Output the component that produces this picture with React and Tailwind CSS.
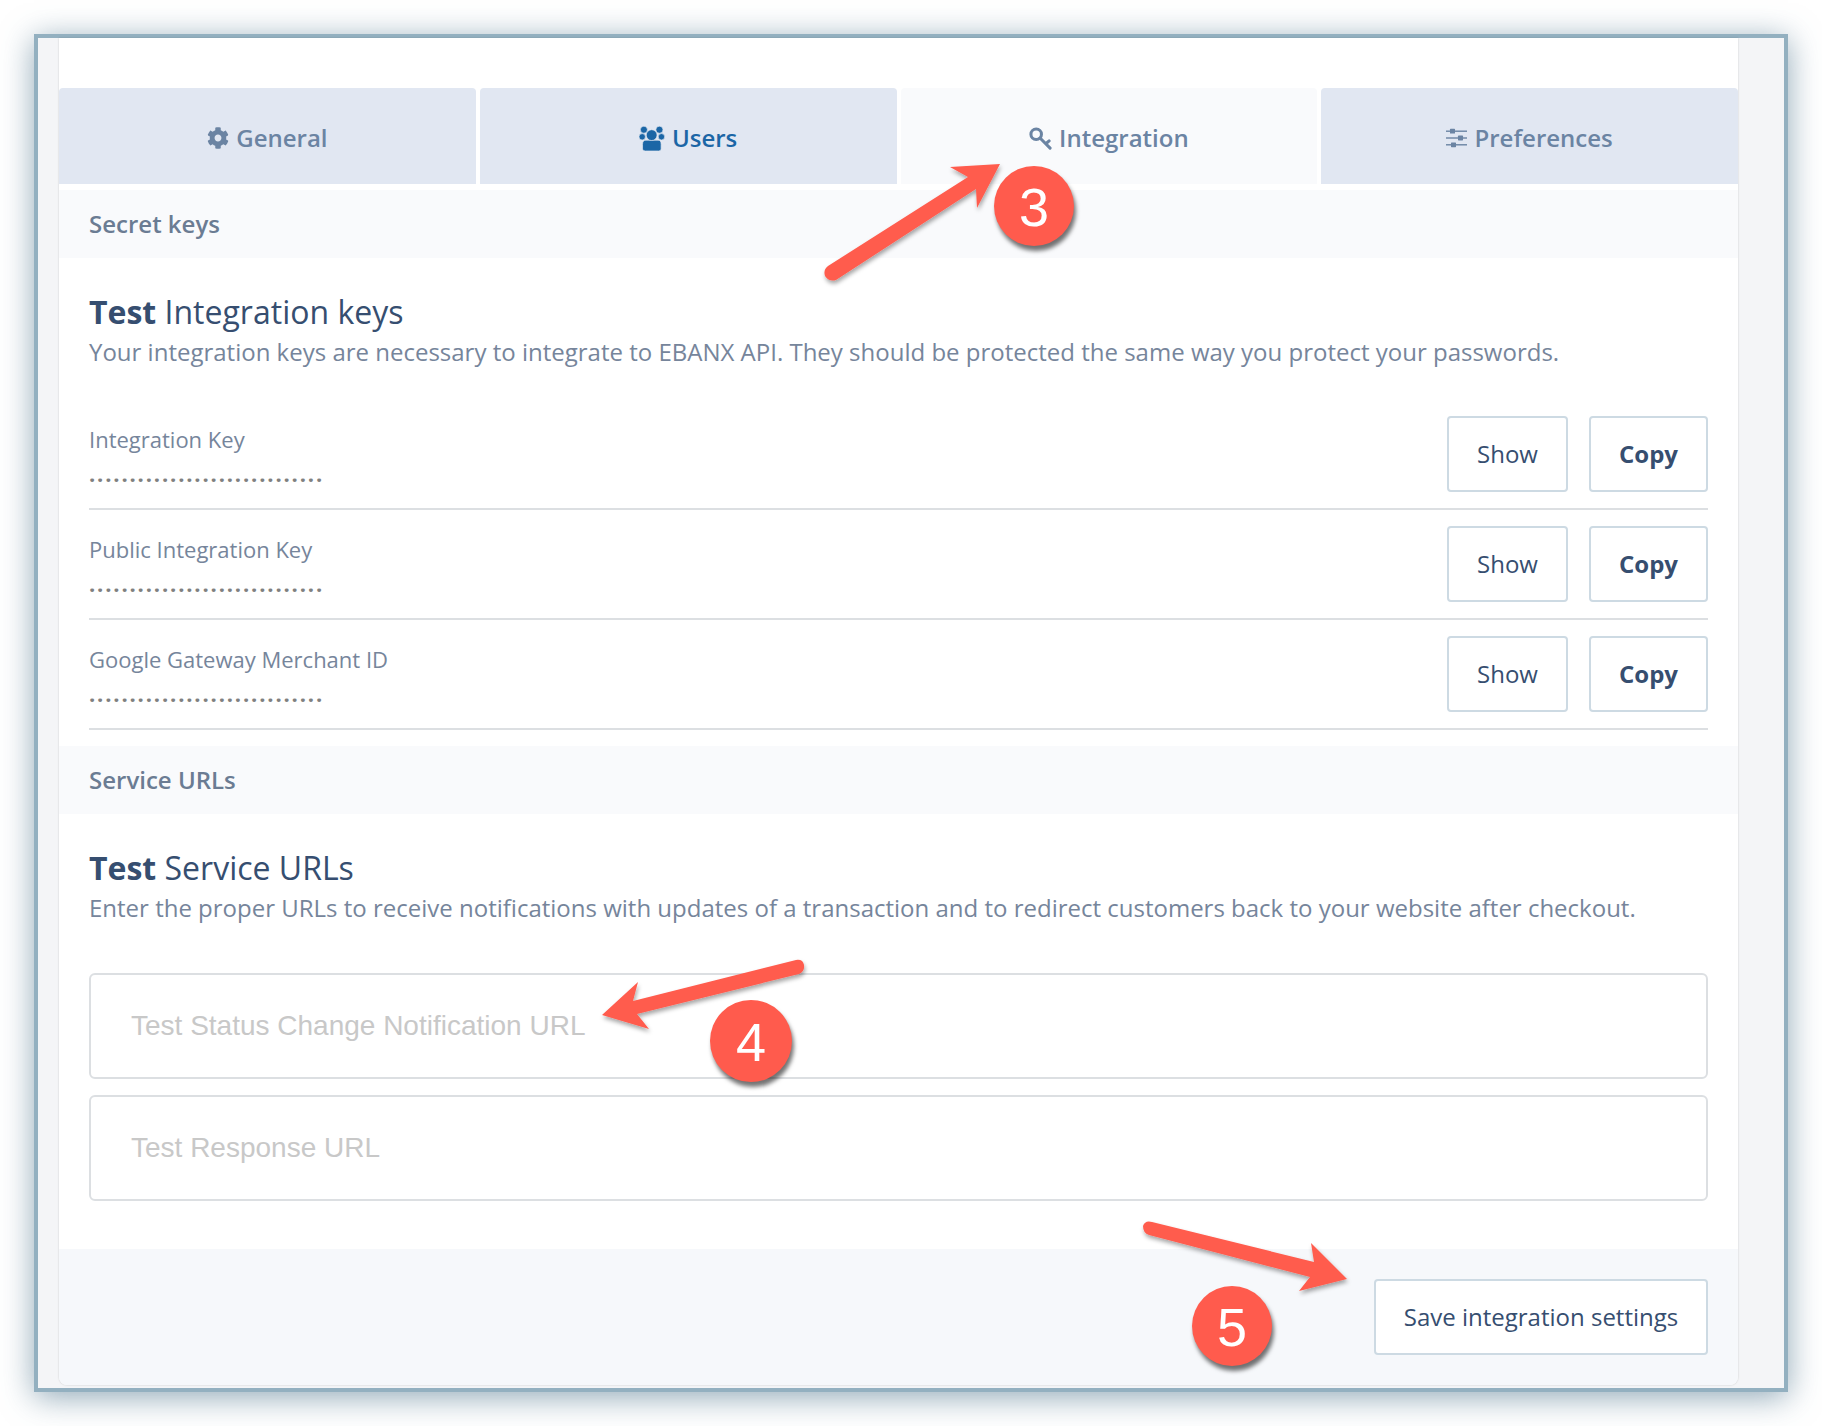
import { FaCog } from "react-icons/fa";

const openSans = "font-['Open_Sans',sans-serif]";

function UsersIcon({ className }) {
  return (
    <svg viewBox="0 0 76 74" className={className} fill="currentColor" stroke="#e1e7f2" strokeWidth="2">
      <circle cx="14" cy="11" r="10.5" />
      <circle cx="60" cy="11" r="10.5" />
      <circle cx="9" cy="32" r="9.5" />
      <circle cx="66" cy="32" r="9.5" />
      <path d="M20 42H56Q65 42 65 54V68Q65 74 58 74H18Q10 74 10 68V54Q10 42 20 42Z" />
      <circle cx="37" cy="27" r="16" />
    </svg>
  );
}

function KeyIcon({ className }) {
  return (
    <svg viewBox="0 0 24 24" className={className} fill="none" stroke="currentColor" strokeWidth="3.2">
      <circle cx="7.5" cy="7.5" r="5.5" />
      <path d="M11.5 11.5l10.5 10.5M17.5 17.5l3.5-3" strokeLinecap="round" />
    </svg>
  );
}

function SlidersIcon({ className }) {
  return (
    <svg viewBox="0 0 21 20" className={className} fill="currentColor">
      <rect x="0" y="2.5" width="21" height="1.4" />
      <rect x="0" y="9.3" width="21" height="1.4" />
      <rect x="0" y="16.1" width="21" height="1.4" />
      <rect x="4" y="0.8" width="5" height="4.8" rx="0.6" />
      <rect x="12" y="7.6" width="5" height="4.8" rx="0.6" />
      <rect x="5" y="14.4" width="5" height="4.8" rx="0.6" />
    </svg>
  );
}

function Tab({ icon, label, active, accent }) {
  return (
    <div
      className={`flex-1 h-24 pt-[4px] rounded-t flex items-center justify-center gap-[7px] text-[24px] font-semibold ${
        active ? "bg-[#f9fafc]" : "bg-[#e1e7f2]"
      } ${accent ? "text-[#1b66a6]" : "text-[#6b84a3]"}`}
    >
      {icon}
      <span>{label}</span>
    </div>
  );
}

function SectionLabel({ children }) {
  return (
    <div className="h-[68px] bg-[#f9fafc] px-[30px] flex items-center text-[24px] font-semibold text-[#6b7c93]">
      {children}
    </div>
  );
}

function Intro({ title, text }) {
  return (
    <div className="px-[30px]">
      <h2 className="text-[32px] leading-[40px] text-[#364e70]">
        <span className="font-bold">Test</span> {title}
      </h2>
      <p className="text-[24px] leading-[32px] mt-[4px] text-[#76859b] whitespace-nowrap">{text}</p>
    </div>
  );
}

function KeyRow({ label }) {
  return (
    <div className="flex items-start justify-between py-4 border-b-2 border-[#dcdfe2]">
      <div className="flex flex-col">
        <span className="text-[22px] leading-[30px] mt-[8px] text-[#76859b]">{label}</span>
        <span className="text-[22px] leading-[30px] mt-[4px] tracking-[1.83px] font-bold text-[#808080] whitespace-nowrap">
          .............................
        </span>
      </div>
      <div className="flex gap-[21px]">
        <button className="w-[121px] h-[76px] border-2 border-[#cddae3] rounded text-[24px] text-[#364e70]">Show</button>
        <button className="w-[119px] h-[76px] border-2 border-[#cddae3] rounded text-[24px] font-bold text-[#364e70]">Copy</button>
      </div>
    </div>
  );
}

function UrlInput({ placeholder, className }) {
  return (
    <div className={`h-[106px] border-2 border-[#dcdfe2] rounded-md px-10 flex items-center text-[28px] font-['Liberation_Sans',sans-serif] text-[#c8c8c8] ${className}`}>
      {placeholder}
    </div>
  );
}

function Badge({ value, className }) {
  return (
    <div className={`absolute rounded-full bg-[#ff5b4d] text-white pt-[3px] flex items-center justify-center text-[54px] font-['Liberation_Sans',sans-serif] shadow-[2px_5px_4px_rgba(0,0,0,0.55)] ${className}`}>
      {value}
    </div>
  );
}

function Arrows() {
  return (
    <svg className="absolute left-0 top-0 w-[1822px] h-[1426px] pointer-events-none" viewBox="0 0 1822 1426">
      <defs>
        <filter id="arrowShadow" x="-20%" y="-20%" width="140%" height="140%">
          <feDropShadow dx="1" dy="3" stdDeviation="2" floodColor="#000" floodOpacity="0.35" />
        </filter>
      </defs>
      <g fill="#ff5b4d" filter="url(#arrowShadow)">
        <path d="M1000 164L950 167L968 177L828 266Q823 270 825 276Q829 282 836 280L976 189L977 208Z" />
        <path d="M602 1015L638 982L633 1001L796 960Q803 959 804 965Q805 971 799 974L637 1014L649 1029Z" />
        <path d="M1347 1279L1311 1243L1314 1262L1152 1222Q1145 1220 1143 1226Q1143 1233 1149 1235L1310 1277L1299 1291Z" />
      </g>
    </svg>
  );
}

export default function App() {
  return (
    <div className={`relative w-[1822px] h-[1426px] bg-white pt-[34px] pl-[34px] overflow-hidden ${openSans}`}>
      <div className="w-[1754px] h-[1358px] border-4 border-[#93b0c0] bg-[#f4f5f7] pl-[21px] shadow-[0_5px_30px_rgba(70,110,135,0.6)]">
        <div className="w-[1679px] h-[1347px] bg-white rounded-b-lg overflow-hidden flex flex-col shadow-[0_0_2px_rgba(0,0,0,0.2)]">
          <div className="flex gap-1 mt-[50px]">
            <Tab icon={<FaCog className="w-[22px] h-[22px]" />} label="General" />
            <Tab icon={<UsersIcon className="w-[26px] h-[25px]" />} label="Users" accent />
            <Tab icon={<KeyIcon className="w-[23px] h-[23px]" />} label="Integration" active />
            <Tab icon={<SlidersIcon className="w-[21px] h-[20px]" />} label="Preferences" />
          </div>
          <div className="mt-[6px]">
            <SectionLabel>Secret keys</SectionLabel>
          </div>
          <div className="pt-[34px]">
            <Intro
              title="Integration keys"
              text="Your integration keys are necessary to integrate to EBANX API. They should be protected the same way you protect your passwords."
            />
          </div>
          <div className="px-[30px] mt-[32px]">
            <KeyRow label="Integration Key" />
            <KeyRow label="Public Integration Key" />
            <KeyRow label="Google Gateway Merchant ID" />
          </div>
          <div className="mt-[16px]">
            <SectionLabel>Service URLs</SectionLabel>
          </div>
          <div className="pt-[34px]">
            <Intro
              title="Service URLs"
              text="Enter the proper URLs to receive notifications with updates of a transaction and to redirect customers back to your website after checkout."
            />
          </div>
          <div className="px-[30px] mt-[49px]">
            <UrlInput placeholder="Test Status Change Notification URL" />
            <UrlInput placeholder="Test Response URL" className="mt-[16px]" />
          </div>
          <div className="mt-[48px] flex-1 bg-[#f6f8fb] flex justify-end items-start pt-[30px] pr-[30px]">
            <button className="w-[334px] h-[76px] bg-white border-2 border-[#cddae3] rounded text-[24px] text-[#364e70]">
              Save integration settings
            </button>
          </div>
        </div>
      </div>
      <Arrows />
      <Badge value="3" className="left-[994px] top-[166px] w-20 h-20" />
      <Badge value="4" className="left-[710px] top-[1000px] w-[82px] h-[82px]" />
      <Badge value="5" className="left-[1192px] top-[1286px] w-20 h-20" />
    </div>
  );
}
